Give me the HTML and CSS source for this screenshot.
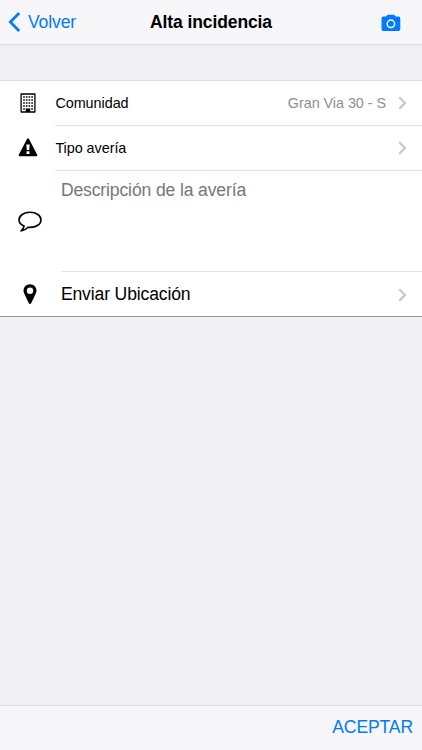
FILE: index.html
```html
<!DOCTYPE html>
<html lang="es">
<head>
    <meta charset="UTF-8">
    <meta name="viewport" content="width=device-width, initial-scale=1">
    <title>Alta incidencia</title>
    <link rel="stylesheet" href="styles.css">
</head>
<body>

    <header class="barra">
        <a class="volver" href="#">
            <svg width="13" height="22" viewBox="0 0 13 22"><path d="M11.2 2 L2.3 11 L11.2 20" fill="none" stroke="currentColor" stroke-width="2.7"/></svg>
            <span>Volver</span>
        </a>
        <h1>Alta incidencia</h1>
        <a class="camara" href="#">
            <svg width="20" height="18" viewBox="0 0 20 18">
                <path fill="currentColor" d="M5 2.6 L6.2 1.1 Q6.6 .7 7.2 .7 H12.4 Q13 .7 13.4 1.1 L14.6 2.6 H17.5 Q19.3 2.6 19.3 4.4 V15.2 Q19.3 17 17.5 17 H2.3 Q.5 17 .5 15.2 V4.4 Q.5 2.6 2.3 2.6 Z"/>
                <circle cx="9.9" cy="9.8" r="3.7" fill="none" stroke="#f7f7f9" stroke-width="1.5"/>
            </svg>
        </a>
    </header>

    <main>
        <div class="lista">
            <div class="fila">
                <div class="icono">
                    <svg width="16" height="20" viewBox="0 0 16 20">
                        <path d="M1.1 1 H14.9 V19 H1.1 Z" fill="none" stroke="#000" stroke-width="1.3" stroke-linejoin="round"/>
                        <path d="M3.2 4 H13 M3.2 7 H13 M3.2 10 H13 M3.2 13 H13" stroke="#000" stroke-width="1.6" stroke-dasharray="1.6 1.1"/>
                        <path d="M3.2 16 H4.8 M11.3 16 H12.9" stroke="#000" stroke-width="1.6"/>
                        <path d="M5.7 15.4 H10.3 V19 H5.7 Z"/>
                    </svg>
                </div>
                <div class="contenido">
                    <span>Comunidad</span>
                    <span class="valor">Gran Via 30 - S</span>
                    <svg class="flecha" width="9" height="14" viewBox="0 0 9 14"><path d="M1.3 1.3 L7 7 L1.3 12.7"/></svg>
                </div>
            </div>
            <div class="fila">
                <div class="icono">
                    <svg width="20" height="20" viewBox="0 0 20 20">
                        <path d="M10 1.3 L18.3 17.2 H1.7 Z" stroke="#000" stroke-width="2" stroke-linejoin="round"/>
                        <path d="M8.3 6.4 H11.7 L11.2 12 H8.8 Z M8.5 13.2 H11.5 V15.9 H8.5 Z" fill="#fff"/>
                    </svg>
                </div>
                <div class="contenido">
                    <span>Tipo avería</span>
                    <svg class="flecha" width="9" height="14" viewBox="0 0 9 14"><path d="M1.3 1.3 L7 7 L1.3 12.7"/></svg>
                </div>
            </div>
            <div class="fila descripcion">
                <div class="icono">
                    <svg width="24" height="22" viewBox="0 0 24 22"><path d="M6.1 15.1 C2.8 13.6 1 11.5 1 8.9 C1 4.7 5.8 1.3 12 1.3 C18.2 1.3 23 4.7 23 8.9 C23 13.2 18.2 16.4 12 16.4 Q11 16.4 10.1 16.3 C7.9 18.5 5.7 19.7 3 20 C4.8 18.3 5.8 16.9 6.1 15.1 Z" fill="none" stroke="#000" stroke-width="1.6" stroke-linejoin="round"/></svg>
                </div>
                <div class="contenido">
                    <textarea placeholder="Descripción de la avería"></textarea>
                </div>
            </div>
            <div class="fila ubicacion">
                <div class="icono">
                    <svg width="14" height="20" viewBox="0 0 14 20"><path fill-rule="evenodd" d="M7 .2 C10.8 .2 13.5 3 13.5 6.6 Q13.5 8.2 12.8 9.6 L8.3 19 Q7.9 19.9 7 19.9 Q6.1 19.9 5.7 19 L1.2 9.6 Q.5 8.2 .5 6.6 C.5 3 3.2 .2 7 .2 Z M7 3.5 A3.2 3.2 0 1 0 7 9.9 A3.2 3.2 0 1 0 7 3.5 Z"/></svg>
                </div>
                <div class="contenido">
                    <span>Enviar Ubicación</span>
                    <svg class="flecha" width="9" height="14" viewBox="0 0 9 14"><path d="M1.3 1.3 L7 7 L1.3 12.7"/></svg>
                </div>
            </div>
        </div>
    </main>

    <footer class="pie">
        <a href="#">ACEPTAR</a>
    </footer>

</body>
</html>
```

FILE: styles.css
```css
* {
    box-sizing: border-box;
}

body {
    margin: 0;
    height: 100vh;
    display: flex;
    flex-direction: column;
    font-family: "Liberation Sans", Arial, sans-serif;
    font-size: 17.6px;
    letter-spacing: -0.15px;
    color: #000;
    background-color: #efeff4;
}

a {
    color: #007aff;
    text-decoration: none;
}

svg {
    display: block;
}

.barra {
    height: 45px;
    display: grid;
    grid-template-columns: 1fr auto 1fr;
    align-items: center;
    padding: 0 21px 0 8px;
    background-color: #f7f7f9;
    border-bottom: 1px solid #dcdce0;
}

.barra h1 {
    margin: 0;
    font-size: 17.5px;
    letter-spacing: -0.1px;
    line-height: 20px;
    /* compensa el relleno desigual de la barra */
    padding-left: 13px;
}

.volver {
    display: flex;
    align-items: center;
    gap: 7px;
}

.camara {
    justify-self: end;
    padding-top: 2px;
}

main {
    flex: 1;
    padding-top: 35px;
}

.lista {
    background-color: #fff;
    border-top: 1px solid #dfdfe3;
    border-bottom: 1px solid #929297;
}

.fila {
    display: flex;
    height: 45px;
    font-size: 14.4px;
    letter-spacing: -0.05px;
}

.icono {
    width: 55px;
    display: flex;
    align-items: center;
    justify-content: center;
    padding-bottom: 2px;
}

.contenido {
    flex: 1;
    display: flex;
    align-items: center;
    padding-left: 0.4px;
    padding-right: 15px;
    border-bottom: 1px solid #e2e2e4;
}

.valor {
    margin-left: auto;
    color: #8e8e93;
}

.flecha {
    margin-left: auto;
    fill: none;
    stroke: #c7c7cc;
    stroke-width: 2.2;
}

.valor + .flecha {
    margin-left: 12px;
}

.descripcion,
.ubicacion {
    font-size: 17.6px;
    letter-spacing: -0.15px;
}

.descripcion .icono,
.ubicacion .icono {
    width: 60.5px;
    padding-bottom: 0;
}

.descripcion {
    height: 101px;
}

.ubicacion {
    height: 44px;
}

.ubicacion .icono {
    padding-bottom: 1px;
}

.ubicacion .contenido {
    padding-top: 1px;
    border-bottom: 0;
}

textarea {
    align-self: stretch;
    flex: 1;
    min-width: 0;
    margin: 0;
    padding: 9px 0;
    border: 0;
    outline: none;
    resize: none;
    font: inherit;
    letter-spacing: inherit;
    background: none;
}

textarea::placeholder {
    color: #777;
}

.pie {
    height: 45px;
    display: flex;
    align-items: center;
    justify-content: flex-end;
    padding: 0 9px 2px;
    background-color: #f7f7f9;
    border-top: 1px solid #dcdce0;
}
```
